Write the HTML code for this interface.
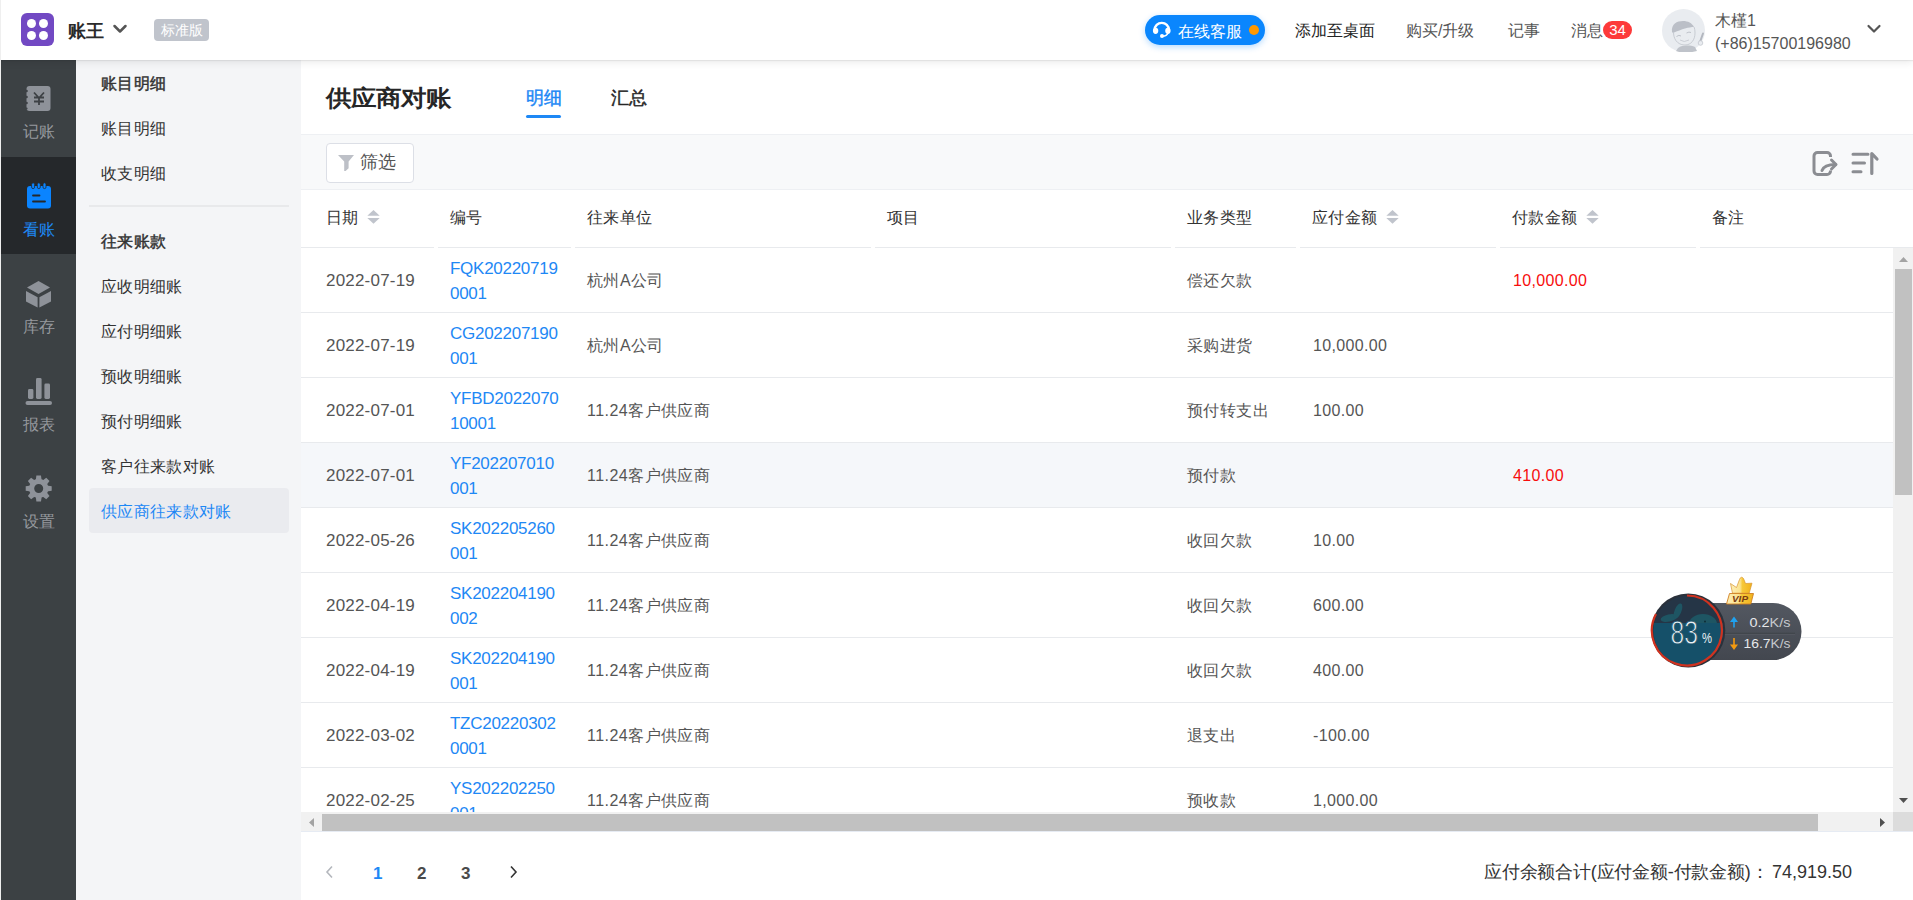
<!DOCTYPE html>
<html><head><meta charset="utf-8">
<style>
*{box-sizing:border-box;margin:0;padding:0}
html,body{width:1913px;height:900px;overflow:hidden;background:#fff;font-family:"Liberation Sans",sans-serif;color:#333}
.abs{position:absolute}
#top{position:absolute;left:0;top:0;width:1913px;height:60px;background:#fff;z-index:5;box-shadow:0 1px 1px rgba(0,0,0,.06),0 2px 8px rgba(0,0,0,.09)}
#side{position:absolute;left:1px;top:60px;width:75px;height:840px;background:#3c4144}
#leftline{position:absolute;left:0;top:0;width:1px;height:900px;background:#efefef;z-index:6}
.nav{position:absolute;left:0;width:75px;height:97px}
.nav .lbl{position:absolute;left:0;width:75px;text-align:center;font-size:16px;color:#95989d;line-height:16px}
.nav.on{background:#25282b}
.nav.on .lbl{color:#1e88f5}
#sub{position:absolute;left:76px;top:60px;width:225px;height:840px;background:#f4f5f7}
.si{position:absolute;left:25px;font-size:16px;line-height:16px;color:#333;white-space:nowrap;letter-spacing:0.35px}
.si.b{font-weight:normal;-webkit-text-stroke:0.45px #333}
#main{position:absolute;left:301px;top:60px;width:1612px;height:840px;background:#fff}
.t{position:absolute;white-space:nowrap;line-height:1}
.dt{font-size:17px;color:#555;letter-spacing:.2px}
.cd{font-size:17px;line-height:25px;color:#1e88f5;letter-spacing:-.27px}
.tx{font-size:16px;color:#555;letter-spacing:0.45px}
.am{font-size:16px;color:#555;letter-spacing:0.35px}
</style></head><body>
<div id="leftline"></div>
<div id="top">
  <div class="abs" style="left:21px;top:13px;width:33px;height:33px;background:#7249c3;border-radius:6px">
    <div class="abs" style="left:6px;top:6px;width:9px;height:9px;border-radius:50%;background:#fff"></div>
    <div class="abs" style="left:18px;top:6px;width:9px;height:9px;border-radius:50%;background:#fff"></div>
    <div class="abs" style="left:6px;top:18px;width:9px;height:9px;border-radius:50%;background:#fff"></div>
    <div class="abs" style="left:18px;top:18px;width:9px;height:9px;border-radius:50%;background:#fff"></div>
  </div>
  <div class="t" style="left:68px;top:22px;font-size:18px;font-weight:bold;color:#2a2a2a">账王</div>
  <svg class="abs" style="left:112px;top:23px" width="16" height="12" viewBox="0 0 16 12"><path d="M2.5 3 L8 8.5 L13.5 3" fill="none" stroke="#555" stroke-width="2.5" stroke-linecap="round" stroke-linejoin="round"/></svg>
  <div class="abs" style="left:154px;top:19px;width:55px;height:22px;background:#c0c4cc;border-radius:4px;color:#fff;font-size:14px;line-height:22px;text-align:center">标准版</div>

  <div class="abs" style="left:1145px;top:15px;width:120px;height:30px;border-radius:15px;background:#0a86fd;box-shadow:0 2px 6px rgba(10,134,253,.3)">
    <svg class="abs" style="left:6px;top:5px" width="22" height="20" viewBox="0 0 22 20"><path d="M3.6 10 A7.1 7.1 0 0 1 17.9 10" fill="none" stroke="#fff" stroke-width="2.4"/><ellipse cx="4.6" cy="10.8" rx="2.7" ry="3.1" fill="#fff"/><ellipse cx="16.9" cy="10.8" rx="2.7" ry="3.1" fill="#fff"/><path d="M17 13 Q15.8 16 11.5 16.3" fill="none" stroke="#fff" stroke-width="1.6"/><circle cx="11" cy="16.1" r="2" fill="#fff"/></svg>
    <div class="t" style="left:33px;top:9px;font-size:16px;color:#fff">在线客服</div>
    <div class="abs" style="left:104px;top:10px;width:10px;height:10px;border-radius:50%;background:#ff9800"></div>
  </div>
  <div class="t" style="left:1295px;top:23px;font-size:16px;color:#222">添加至桌面</div>
  <div class="t" style="left:1406px;top:23px;font-size:16px;color:#555">购买/升级</div>
  <div class="t" style="left:1508px;top:23px;font-size:16px;color:#555">记事</div>
  <div class="t" style="left:1571px;top:23px;font-size:16px;color:#555">消息</div>
  <div class="abs" style="left:1603px;top:21px;width:29px;height:18px;border-radius:9px;background:#fd3a3a;color:#fff;font-size:15px;line-height:17px;text-align:center">34</div>
  <svg class="abs" style="left:1662px;top:9px" width="43" height="43" viewBox="0 0 43 43">
    <circle cx="21.5" cy="21.5" r="21.5" fill="#e9ecf0"/>
    <path d="M10 23 C9 15 15 12 21 12 C26 12 30 14 32 18 C27 18 20 20 11 24 Z" fill="#bbbfc7"/>
    <path d="M11.5 24 C12 33 18 36 23 36 C29 36 33 31 33 24 C33 21 32.5 19 32 18" fill="none" stroke="#c3c7ce" stroke-width="0.9"/>
    <path d="M14.5 27.5 Q17 25.5 19 27 M24.5 24 Q27 22.5 29 23.5" fill="none" stroke="#b9bdc5" stroke-width="0.9"/>
    <path d="M18 31 Q22 34 27 31" fill="none" stroke="#c3c7ce" stroke-width="0.8"/>
    <path d="M41 24.5 L38 33" stroke="#b3b7bf" stroke-width="2" stroke-linecap="round"/>
    <circle cx="38.5" cy="34" r="2.3" fill="#e9ecf0" stroke="#c3c7ce" stroke-width="0.8"/>
    <path d="M16 39 C20 36 28 36 33 38 L35 42 C28 44 18 44 14 42 Z" fill="#bfc3ca"/>
  </svg>
  <div class="t" style="left:1715px;top:13px;font-size:16px;color:#555">木槿1</div>
  <div class="t" style="left:1715px;top:36px;font-size:16px;color:#555">(+86)15700196980</div>
  <svg class="abs" style="left:1866px;top:23px" width="16" height="12" viewBox="0 0 16 12"><path d="M2.5 3 L8 8.5 L13.5 3" fill="none" stroke="#555" stroke-width="2.2" stroke-linecap="round" stroke-linejoin="round"/></svg>
</div>

<div id="side">
  <div class="nav" style="top:0"><div class="lbl" style="top:64px">记账</div></div>
  <div class="nav on" style="top:97px"><div class="lbl" style="top:65px">看账</div></div>
  <div class="nav" style="top:194px"><div class="lbl" style="top:65px">库存</div></div>
  <div class="nav" style="top:291px"><div class="lbl" style="top:66px">报表</div></div>
  <div class="nav" style="top:388px"><div class="lbl" style="top:66px">设置</div></div>
</div>

<svg class="abs" style="left:0;top:0;z-index:4" width="76" height="900" viewBox="0 0 76 900">
  <!-- book yen -->
  <rect x="26.5" y="86" width="24" height="25" rx="3" fill="#8e9299"/>
  <circle cx="26.5" cy="91" r="1.3" fill="#3d4145"/><circle cx="26.5" cy="97" r="1.3" fill="#3d4145"/><circle cx="26.5" cy="103" r="1.3" fill="#3d4145"/><circle cx="26.5" cy="108.5" r="1.1" fill="#3d4145"/>
  <path d="M34 92.5 L39 98 L44 92.5 M34 97.5 H44 M34 101.5 H44 M39 98 V105" fill="none" stroke="#3d4145" stroke-width="1.8"/>
  <!-- calendar -->
  <rect x="27" y="186" width="24" height="22.5" rx="3" fill="#0a84ff"/>
  <rect x="31.6" y="182.8" width="3" height="5.8" rx="1.5" fill="#0a84ff" stroke="#25282b" stroke-width="0.8"/>
  <rect x="37.3" y="182.8" width="3" height="5.8" rx="1.5" fill="#0a84ff" stroke="#25282b" stroke-width="0.8"/>
  <rect x="43" y="182.8" width="3" height="5.8" rx="1.5" fill="#0a84ff" stroke="#25282b" stroke-width="0.8"/>
  <path d="M33 195.5 H39.5 M33 201.5 H45" fill="none" stroke="#25282b" stroke-width="1.8" stroke-linecap="round"/>
  <!-- cube -->
  <path d="M38.5 281 L50 287.5 L38.5 294 L27 287.5 Z" fill="#8e9299"/>
  <path d="M26 291 L37.6 297.2 V307.6 L26 301.6 Z" fill="#8e9299"/>
  <path d="M39.4 297.2 L51 291 V301.6 L39.4 307.6 Z" fill="#8e9299"/>
  <!-- chart -->
  <rect x="28" y="389" width="5.4" height="10" rx="1.4" fill="#8e9299"/>
  <rect x="36" y="378" width="5.6" height="21" rx="1.4" fill="#8e9299"/>
  <rect x="44.4" y="383.6" width="5.6" height="15.4" rx="1.4" fill="#8e9299"/>
  <rect x="25.5" y="401" width="26.5" height="4" rx="2" fill="#8e9299"/>
  <!-- gear -->
  <g transform="translate(38.7 488.5)">
    <path id="gt" d="M-2.3 -13 H2.3 L3 -8 H-3 Z" fill="#8e9299"/>
    <use href="#gt" transform="rotate(45)"/><use href="#gt" transform="rotate(90)"/><use href="#gt" transform="rotate(135)"/><use href="#gt" transform="rotate(180)"/><use href="#gt" transform="rotate(225)"/><use href="#gt" transform="rotate(270)"/><use href="#gt" transform="rotate(315)"/>
    <circle r="7.1" fill="none" stroke="#8e9299" stroke-width="5.2"/>
  </g>
</svg>
<div id="sub">
  <div class="si b" style="top:16px">账目明细</div>
  <div class="si" style="top:61px">账目明细</div>
  <div class="si" style="top:106px">收支明细</div>
  <div class="abs" style="left:13px;top:145px;width:200px;height:2px;background:#e8e9eb"></div>
  <div class="si b" style="top:174px">往来账款</div>
  <div class="si" style="top:219px">应收明细账</div>
  <div class="si" style="top:264px">应付明细账</div>
  <div class="si" style="top:309px">预收明细账</div>
  <div class="si" style="top:354px">预付明细账</div>
  <div class="si" style="top:399px">客户往来款对账</div>
  <div class="abs" style="left:13px;top:428px;width:200px;height:45px;background:#eaebef;border-radius:4px"></div>
  <div class="si" style="top:444px;color:#1e88f5">供应商往来款对账</div>
</div>

<div id="main">
  <div class="t" style="left:25px;top:26px;font-size:25px;font-weight:bold;color:#262626;transform:scaleY(0.9);transform-origin:0 50%">供应商对账</div>
  <div class="t" style="left:225px;top:29px;font-size:18px;color:#1e88f5;-webkit-text-stroke:0.45px #1e88f5">明细</div>
  <div class="abs" style="left:225px;top:55px;width:35px;height:3px;background:#1e88f5;border-radius:2px"></div>
  <div class="t" style="left:310px;top:29px;font-size:18px;color:#262626;-webkit-text-stroke:0.45px #262626">汇总</div>
  <div class="abs" style="left:0;top:74px;width:1612px;height:56px;background:#f8f9fa;border-top:1px solid #eef0f3;border-bottom:1px solid #eef0f3"></div>
  <div class="abs" style="left:25px;top:83px;width:88px;height:40px;background:#fff;border:1px solid #dcdfe6;border-radius:4px">
    <svg class="abs" style="left:10px;top:11px" width="18" height="17" viewBox="0 0 18 17"><path d="M1 0 H17 L11.6 6.5 V13.2 L8.6 16 H7.2 V6.5 Z" fill="#bdc0c7"/></svg>
    <div class="t" style="left:33px;top:9px;font-size:18px;color:#555">筛选</div>
  </div>
<div class="abs" style="left:0;top:187px;width:1612px;height:1px;background:#e8eaed"></div>
<div class="abs" style="left:133px;top:187px;width:4px;height:1px;background:#fff"></div>
<div class="abs" style="left:270px;top:187px;width:4px;height:1px;background:#fff"></div>
<div class="abs" style="left:570px;top:187px;width:4px;height:1px;background:#fff"></div>
<div class="abs" style="left:870px;top:187px;width:4px;height:1px;background:#fff"></div>
<div class="abs" style="left:995px;top:187px;width:4px;height:1px;background:#fff"></div>
<div class="abs" style="left:1195px;top:187px;width:4px;height:1px;background:#fff"></div>
<div class="abs" style="left:1395px;top:187px;width:4px;height:1px;background:#fff"></div>
<div class="t" style="left:25px;top:150px;font-size:16px;color:#333;letter-spacing:0.35px">日期</div>
<svg class="abs" style="left:66px;top:150px" width="13" height="15" viewBox="0 0 13 15"><path d="M6.5 0 L12.7 5.8 H0.3 Z" fill="#c0c4cc"/><path d="M0.3 8 H12.7 L6.5 13.8 Z" fill="#c0c4cc"/></svg>
<div class="t" style="left:149px;top:150px;font-size:16px;color:#333;letter-spacing:0.35px">编号</div>
<div class="t" style="left:286px;top:150px;font-size:16px;color:#333;letter-spacing:0.35px">往来单位</div>
<div class="t" style="left:586px;top:150px;font-size:16px;color:#333;letter-spacing:0.35px">项目</div>
<div class="t" style="left:886px;top:150px;font-size:16px;color:#333;letter-spacing:0.35px">业务类型</div>
<div class="t" style="left:1011px;top:150px;font-size:16px;color:#333;letter-spacing:0.35px">应付金额</div>
<svg class="abs" style="left:1085px;top:150px" width="13" height="15" viewBox="0 0 13 15"><path d="M6.5 0 L12.7 5.8 H0.3 Z" fill="#c0c4cc"/><path d="M0.3 8 H12.7 L6.5 13.8 Z" fill="#c0c4cc"/></svg>
<div class="t" style="left:1211px;top:150px;font-size:16px;color:#333;letter-spacing:0.35px">付款金额</div>
<svg class="abs" style="left:1285px;top:150px" width="13" height="15" viewBox="0 0 13 15"><path d="M6.5 0 L12.7 5.8 H0.3 Z" fill="#c0c4cc"/><path d="M0.3 8 H12.7 L6.5 13.8 Z" fill="#c0c4cc"/></svg>
<div class="t" style="left:1411px;top:150px;font-size:16px;color:#333;letter-spacing:0.35px">备注</div>
<div class="abs" style="left:0;top:188px;width:1612px;height:564px;overflow:hidden"><div class="abs" style="left:0;top:0px;width:1592px;height:65px;background:#fff;border-bottom:1px solid #e8eaed"><div class="t dt" style="left:25px;top:24px">2022-07-19</div><div class="t cd" style="left:149px;top:8px">FQK20220719<br>0001</div><div class="t tx" style="left:286px;top:25px">杭州A公司</div><div class="t tx" style="left:886px;top:25px">偿还欠款</div><div class="t am" style="left:1212px;top:25px;color:#f70d0d">10,000.00</div></div><div class="abs" style="left:0;top:65px;width:1592px;height:65px;background:#fff;border-bottom:1px solid #e8eaed"><div class="t dt" style="left:25px;top:24px">2022-07-19</div><div class="t cd" style="left:149px;top:8px">CG202207190<br>001</div><div class="t tx" style="left:286px;top:25px">杭州A公司</div><div class="t tx" style="left:886px;top:25px">采购进货</div><div class="t am" style="left:1012px;top:25px">10,000.00</div></div><div class="abs" style="left:0;top:130px;width:1592px;height:65px;background:#fff;border-bottom:1px solid #e8eaed"><div class="t dt" style="left:25px;top:24px">2022-07-01</div><div class="t cd" style="left:149px;top:8px">YFBD2022070<br>10001</div><div class="t tx" style="left:286px;top:25px">11.24客户供应商</div><div class="t tx" style="left:886px;top:25px">预付转支出</div><div class="t am" style="left:1012px;top:25px">100.00</div></div><div class="abs" style="left:0;top:195px;width:1592px;height:65px;background:#f5f7fa;border-bottom:1px solid #e8eaed"><div class="t dt" style="left:25px;top:24px">2022-07-01</div><div class="t cd" style="left:149px;top:8px">YF202207010<br>001</div><div class="t tx" style="left:286px;top:25px">11.24客户供应商</div><div class="t tx" style="left:886px;top:25px">预付款</div><div class="t am" style="left:1212px;top:25px;color:#f70d0d">410.00</div></div><div class="abs" style="left:0;top:260px;width:1592px;height:65px;background:#fff;border-bottom:1px solid #e8eaed"><div class="t dt" style="left:25px;top:24px">2022-05-26</div><div class="t cd" style="left:149px;top:8px">SK202205260<br>001</div><div class="t tx" style="left:286px;top:25px">11.24客户供应商</div><div class="t tx" style="left:886px;top:25px">收回欠款</div><div class="t am" style="left:1012px;top:25px">10.00</div></div><div class="abs" style="left:0;top:325px;width:1592px;height:65px;background:#fff;border-bottom:1px solid #e8eaed"><div class="t dt" style="left:25px;top:24px">2022-04-19</div><div class="t cd" style="left:149px;top:8px">SK202204190<br>002</div><div class="t tx" style="left:286px;top:25px">11.24客户供应商</div><div class="t tx" style="left:886px;top:25px">收回欠款</div><div class="t am" style="left:1012px;top:25px">600.00</div></div><div class="abs" style="left:0;top:390px;width:1592px;height:65px;background:#fff;border-bottom:1px solid #e8eaed"><div class="t dt" style="left:25px;top:24px">2022-04-19</div><div class="t cd" style="left:149px;top:8px">SK202204190<br>001</div><div class="t tx" style="left:286px;top:25px">11.24客户供应商</div><div class="t tx" style="left:886px;top:25px">收回欠款</div><div class="t am" style="left:1012px;top:25px">400.00</div></div><div class="abs" style="left:0;top:455px;width:1592px;height:65px;background:#fff;border-bottom:1px solid #e8eaed"><div class="t dt" style="left:25px;top:24px">2022-03-02</div><div class="t cd" style="left:149px;top:8px">TZC20220302<br>0001</div><div class="t tx" style="left:286px;top:25px">11.24客户供应商</div><div class="t tx" style="left:886px;top:25px">退支出</div><div class="t am" style="left:1012px;top:25px">-100.00</div></div><div class="abs" style="left:0;top:520px;width:1592px;height:65px;background:#fff;border-bottom:1px solid #e8eaed"><div class="t dt" style="left:25px;top:24px">2022-02-25</div><div class="t cd" style="left:149px;top:8px">YS202202250<br>001</div><div class="t tx" style="left:286px;top:25px">11.24客户供应商</div><div class="t tx" style="left:886px;top:25px">预收款</div><div class="t am" style="left:1012px;top:25px">1,000.00</div></div></div>
  <!-- vertical scrollbar -->
  <div class="abs" style="left:1592px;top:188px;width:20px;height:564px;background:#f1f1f1">
    <svg class="abs" style="left:6px;top:9px" width="9" height="5" viewBox="0 0 9 5"><path d="M4.5 0 L9 5 H0 Z" fill="#a3a3a3"/></svg>
    <div class="abs" style="left:2px;top:21px;width:17px;height:226px;background:#c1c1c1"></div>
    <svg class="abs" style="left:6px;top:550px" width="9" height="5" viewBox="0 0 9 5"><path d="M0 0 H9 L4.5 5 Z" fill="#505050"/></svg>
  </div>
  <!-- horizontal scrollbar -->
  <div class="abs" style="left:0;top:752px;width:1592px;height:19px;background:#f1f1f1">
    <svg class="abs" style="left:8px;top:6px" width="5" height="9" viewBox="0 0 5 9"><path d="M5 0 V9 L0 4.5 Z" fill="#a3a3a3"/></svg>
    <div class="abs" style="left:21px;top:2px;width:1496px;height:17px;background:#c1c1c1"></div>
    <svg class="abs" style="left:1579px;top:6px" width="5" height="9" viewBox="0 0 5 9"><path d="M0 0 L5 4.5 L0 9 Z" fill="#505050"/></svg>
  </div>
  <div class="abs" style="left:1592px;top:752px;width:20px;height:19px;background:#dcdcdc"></div>
  <div class="abs" style="left:0;top:771px;width:1612px;height:1px;background:#e6ebf3"></div>
  <!-- pagination -->
  <svg class="abs" style="left:23px;top:805px" width="10" height="14" viewBox="0 0 10 14"><path d="M8 1.5 L3 7 L8 12.5" fill="none" stroke="#b4b7bd" stroke-width="1.6"/></svg>
  <div class="t" style="left:72px;top:805px;font-size:17px;font-weight:bold;color:#1e88f5">1</div>
  <div class="t" style="left:116px;top:805px;font-size:17px;font-weight:bold;color:#4a4a4a">2</div>
  <div class="t" style="left:160px;top:805px;font-size:17px;font-weight:bold;color:#4a4a4a">3</div>
  <svg class="abs" style="left:208px;top:805px" width="10" height="14" viewBox="0 0 10 14"><path d="M2 1.5 L7 7 L2 12.5" fill="none" stroke="#333" stroke-width="1.6"/></svg>
  <div class="t" style="left:1183px;top:803px;font-size:18px;color:#333;letter-spacing:-0.2px">应付余额合计(应付金额-付款金额)：</div>
  <div class="t" style="left:1471px;top:803px;font-size:18px;color:#333">74,919.50</div>
  <!-- toolbar icons -->
  <svg class="abs" style="left:1510px;top:90px" width="30" height="28" viewBox="0 0 30 28"><path d="M19.5 7 V6 A3.5 3.5 0 0 0 16 2.5 H6.5 A3.5 3.5 0 0 0 3 6 V21 A3.5 3.5 0 0 0 6.5 24.5 H16 A3.5 3.5 0 0 0 19.5 21 V20.5" fill="none" stroke="#8b8d92" stroke-width="3" stroke-linecap="butt"/><path d="M11 20.5 C12.5 16.5 16 14.5 24.5 14.5" fill="none" stroke="#8b8d92" stroke-width="3" stroke-linecap="round"/><path d="M20.5 10 L25 14.5 L20.5 19" fill="none" stroke="#8b8d92" stroke-width="3" stroke-linecap="round" stroke-linejoin="round"/></svg>
  <svg class="abs" style="left:1548px;top:90px" width="32" height="28" viewBox="0 0 32 28"><path d="M4 4.25 H19 M4 13 H15.5 M4 21.75 H12" fill="none" stroke="#8b8d92" stroke-width="3" stroke-linecap="round"/><path d="M22.8 23.5 V3.5 L28 9" fill="none" stroke="#8b8d92" stroke-width="3.2" stroke-linecap="round" stroke-linejoin="round"/></svg>

</div>
<svg class="abs" style="left:1645px;top:570px;z-index:8" width="160" height="100" viewBox="0 0 160 100">
  <defs>
    <linearGradient id="pg" x1="0" y1="0" x2="0" y2="1"><stop offset="0" stop-color="#535861"/><stop offset="1" stop-color="#43474f"/></linearGradient>
    <clipPath id="cc"><circle cx="43.3" cy="60.5" r="35"/></clipPath>
    <linearGradient id="cg" x1="0" y1="0" x2="0" y2="1"><stop offset="0" stop-color="#ffe48a"/><stop offset="1" stop-color="#f0a920"/></linearGradient>
  </defs>
  <path d="M60 33 H128 A28.5 28.5 0 0 1 128 90 H60 Z" fill="url(#pg)"/>
  <path d="M75 63.3 H150" stroke="#3c4047" stroke-width="1"/>
  <path d="M75 64.3 H150" stroke="#5a5f68" stroke-width="0.6"/>
  <circle cx="43.3" cy="60.5" r="37" fill="#2a313b"/>
  <g clip-path="url(#cc)">
    <rect x="0" y="20" width="90" height="85" fill="#253546"/>
    <ellipse cx="24" cy="48" rx="8.5" ry="3.6" transform="rotate(-12 24 48)" fill="#1e5563"/><ellipse cx="33" cy="41" rx="3.4" ry="8" transform="rotate(22 33 41)" fill="#1e5563"/>
    <ellipse cx="58" cy="54" rx="14" ry="10" fill="#1e5563"/><circle cx="60" cy="51.5" r="0.9" fill="#0d2a33"/>
    <rect x="0" y="53" width="90" height="50" fill="#155069"/>
  </g>
  <path d="M42 25.5 A35 35 0 1 1 11 44" fill="none" stroke="#d0321f" stroke-width="2.2"/>
  <text x="25.5" y="74.4" font-family="Liberation Sans" font-size="33" fill="#e9f1f4" stroke="#16506a" stroke-width="0.9" textLength="27.5" lengthAdjust="spacingAndGlyphs">83</text>
  <text x="57" y="72.8" font-family="Liberation Sans" font-size="15" fill="#e9f1f4" textLength="10" lengthAdjust="spacingAndGlyphs">%</text>
  <path d="M89 46.5 L85 52 H88.2 V57.5 H89.8 V52 H93 Z" fill="#1fa2f0"/>
  <path d="M89 80 L85 74.5 H88.2 V68 H89.8 V74.5 H93 Z" fill="#f39a10"/>
  <text x="104.5" y="57.3" font-family="Liberation Sans" font-size="13.5" fill="#e6e8ea" textLength="41" lengthAdjust="spacingAndGlyphs">0.2<tspan fill="#c6c9cd">K/s</tspan></text>
  <text x="98.5" y="78.3" font-family="Liberation Sans" font-size="13.5" fill="#e6e8ea" textLength="47" lengthAdjust="spacingAndGlyphs">16.7<tspan fill="#c6c9cd">K/s</tspan></text>
  <!-- crown -->
  <defs><linearGradient id="cg2" x1="0" y1="0" x2="1" y2="0"><stop offset="0" stop-color="#fdeeb5"/><stop offset="0.45" stop-color="#fbe38f"/><stop offset="0.55" stop-color="#f7c83a"/><stop offset="1" stop-color="#f0b21c"/></linearGradient></defs>
  <path d="M85.5 13.5 L91.5 17.5 L94.5 9.5 Q96 5.5 98.5 8.5 L100.5 13.5 L107 13.2 L104.2 23.2 H87.5 Z" fill="url(#cg2)" stroke="#d89530" stroke-width="0.7" stroke-linejoin="round"/>
  <path d="M84.5 23.5 H108.5 L105.8 34 H81.5 Z" fill="url(#cg2)" stroke="#cf7f22" stroke-width="0.9"/>
  <text x="87" y="32" font-family="Liberation Sans" font-size="9.5" font-weight="bold" font-style="italic" fill="#7a3b12" textLength="16" lengthAdjust="spacingAndGlyphs">VIP</text>
</svg>
</body></html>
